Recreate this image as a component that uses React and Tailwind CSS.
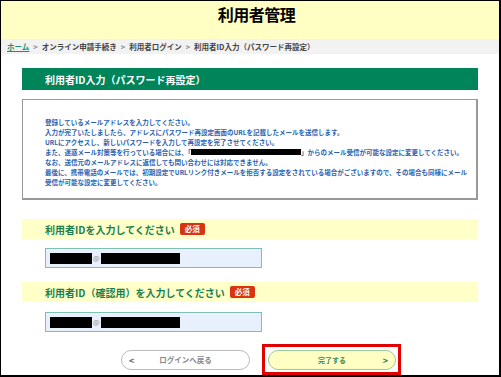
export default function App() {
  const jp = { fontFamily: '"Noto Sans CJK JP", "Noto Sans", sans-serif' };
  const Redacted = () => (
    <div className="flex items-center h-full pl-[4px]">
      <div className="w-[42px] h-[11px] bg-black" />
      <span className="text-[7px] leading-none text-[#888] px-[1px]">@</span>
      <div className="w-[79px] h-[11px] bg-black" />
    </div>
  );
  return (
    <div
      style={jp}
      className="w-[501px] h-[377px] box-border border-t border-l border-r-2 border-b-2 border-black bg-white overflow-hidden flex flex-col"
    >
      <div className="h-[38px] bg-[#ffffc4] flex justify-center pt-[4px] pl-[13px]">
        <h1 className="text-[16px] leading-[18px] font-bold text-black tracking-[-0.5px]">利用者管理</h1>
      </div>
      <div className="h-[15px] bg-[#f2f2f2] flex items-center pl-[6px] text-[7.5px] text-[#444] font-bold">
        <span className="text-[#1a9070] underline">ホーム</span>
        <span className="px-[4px] text-[#888]">&gt;</span>
        <span>オンライン申請手続き</span>
        <span className="px-[4px] text-[#888]">&gt;</span>
        <span>利用者ログイン</span>
        <span className="px-[4px] text-[#888]">&gt;</span>
        <span>利用者ID入力（パスワード再設定）</span>
      </div>
      <div className="px-[21px] pt-[14px] flex flex-col">
        <div className="h-[22px] bg-[#00845a] flex items-center pl-[23px] text-white text-[10px] font-bold">
          利用者ID入力（パスワード再設定）
        </div>
        <div className="mt-[9px] h-[101px] border border-[#999] border-r-2 border-b-2 pl-[22px] pt-[17px] text-[6.5px] leading-[10px] font-bold text-[#2a5fb0] whitespace-nowrap">
          <p>登録しているメールアドレスを入力してください。</p>
          <p>入力が完了いたしましたら、アドレスにパスワード再設定画面のURLを記載したメールを送信します。</p>
          <p>URLにアクセスし、新しいパスワードを入力して再設定を完了させてください。</p>
          <p className="flex items-center">
            <span>また、迷惑メール対策等を行っている場合には、「</span>
            <span className="inline-block w-[110px] h-[6px] bg-black" />
            <span>」からのメール受信が可能な設定に変更してください。</span>
          </p>
          <p>なお、送信元のメールアドレスに返信しても問い合わせには対応できません。</p>
          <p>最後に、携帯電話のメールでは、初期設定でURLリンク付きメールを拒否する設定をされている場合がございますので、その場合も同様にメール</p>
          <p>受信が可能な設定に変更してください。</p>
        </div>
        <div className="mt-[19px] h-[20px] bg-[#ffffc8] flex items-center pl-[23px]">
          <span className="text-[10px] font-bold text-[#1a7f50]">利用者IDを入力してください</span>
          <span className="ml-[5px] bg-[#d8340f] text-white text-[7.5px] font-bold px-[5px] h-[12px] leading-[12px] rounded-[2px]">必須</span>
        </div>
        <div className="mt-[9px] ml-[23px] w-[217px] h-[20px] bg-[#e8f0fd] border border-[#82bfb2]">
          <Redacted />
        </div>
        <div className="mt-[14px] h-[20px] bg-[#ffffc8] flex items-center pl-[23px]">
          <span className="text-[10px] font-bold text-[#1a7f50]">利用者ID（確認用）を入力してください</span>
          <span className="ml-[5px] bg-[#d8340f] text-white text-[7.5px] font-bold px-[5px] h-[12px] leading-[12px] rounded-[2px]">必須</span>
        </div>
        <div className="mt-[10px] ml-[23px] w-[217px] h-[20px] bg-[#e8f0fd] border border-[#82bfb2]">
          <Redacted />
        </div>
        <div className="mt-[18px] ml-[99px] flex gap-[18px]">
          <div className="w-[129px] h-[20px] rounded-full border border-[#bbb] bg-white flex items-center relative">
            <span className="absolute left-[7px] text-[9px] font-bold text-[#666] leading-none">&lt;</span>
            <span className="w-full text-center text-[7.5px] font-bold text-[#888]">ログインへ戻る</span>
          </div>
          <div className="relative">
            <div className="w-[128px] h-[20px] rounded-full border border-[#9cc79c] bg-[#ffffc4] flex items-center relative">
              <span className="w-full text-center text-[7px] font-bold text-[#3a8a5a]">完了する</span>
              <span className="absolute right-[7px] text-[9px] font-bold text-[#3a7a5a] leading-none">&gt;</span>
            </div>
            <div className="absolute -left-[6px] -right-[5px] -top-[6px] -bottom-[5px] border-[3px] border-[#e00000]" />
          </div>
        </div>
      </div>
    </div>
  );
}
